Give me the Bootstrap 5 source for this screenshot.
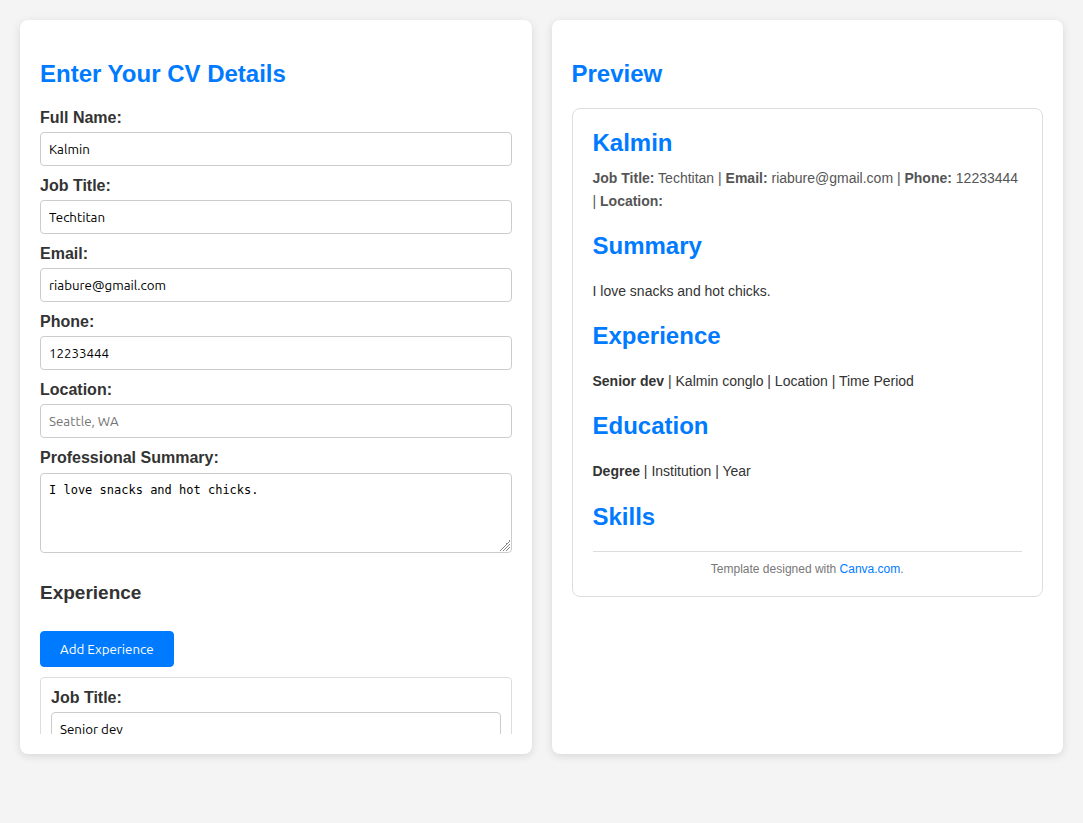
<!DOCTYPE html>
<html lang="en">
<head>
<meta charset="utf-8">
<meta name="viewport" content="width=device-width, initial-scale=1">
<title>CV Builder</title>
<link href="https://cdn.jsdelivr.net/npm/bootstrap@5.3.0/dist/css/bootstrap.min.css" rel="stylesheet">
<style>
  body { background: #f4f4f4; color: #333; font-family: "Liberation Sans", Arial, sans-serif; font-size: 16px; line-height: 18px; }
  .builder { gap: 20px; padding: 20px 20px 69px; }
  .panel { flex: 1 1 0; min-width: 0; padding: 20px; background: #fff; border-radius: 8px; box-shadow: 0 2px 8px rgba(0, 0, 0, .12); }
  h2 { margin: 20px 0; font-size: 24px; line-height: 28px; font-weight: 700; color: #007bff; }
  h3 { margin: 29px 0 27px; font-size: 19px; line-height: 22px; font-weight: 700; }
  .field { margin-bottom: 10px; }
  .form-label { display: block; margin-bottom: 4px; line-height: 20px; font-weight: 700; }
  .form-control, .form-control:focus { padding: 8px; border: 1px solid #ccc; border-radius: 4px; color: #000; background: #fff; }
  input.form-control, .btn { font-family: Ubuntu, "Noto Sans", sans-serif; font-size: smaller; line-height: 16px; }
  input.form-control { height: 34px; }
  .form-control::placeholder { color: #757575; }
  textarea.form-control { height: 80px; margin-top: 5px; font-family: "DejaVu Sans Mono", monospace; font-size: 12px; line-height: 16px; }
  textarea::-webkit-resizer { background: linear-gradient(135deg, transparent 50%, #888 50%, #888 58%, transparent 58%, transparent 64%, #888 64%, #888 72%, transparent 72%, transparent 78%, #888 78%, #888 86%, transparent 86%) 3px 3px / 11px 11px no-repeat; }
  .btn-primary { --bs-btn-bg: #007bff; --bs-btn-border-color: #007bff; height: 36px; padding: 10px 19px 8px; border-radius: 4px; }
  .entry { margin-top: 10px; padding: 10px; border: 1px solid #ddd; border-radius: 4px; }
  .resume { padding: 20px; border: 1px solid #ddd; border-radius: 8px; font-size: 14px; line-height: 22px; }
  .resume .person { margin: 0 0 10px; }
  .contact { line-height: 23px; color: #555; }
  .resume p { margin-bottom: 0; }
  .resume .contact + h2 { margin-top: 19px; }
  .resume .skills { margin-top: 21px; }
  .credit { padding-top: 10px; border-top: 1px solid #ddd; font-size: 12px; line-height: 14px; color: #777; }
  .credit a { color: #007bff; }
</style>
</head>
<body>
<main class="builder d-flex vh-100">
  <section class="panel">
    <form class="h-100 overflow-hidden">
      <h2>Enter Your CV Details</h2>
      <div class="field"><label class="form-label" for="name">Full Name:</label><input class="form-control" id="name" type="text" value="Kalmin"></div>
      <div class="field"><label class="form-label" for="title">Job Title:</label><input class="form-control" id="title" type="text" value="Techtitan"></div>
      <div class="field"><label class="form-label" for="email">Email:</label><input class="form-control" id="email" type="email" value="riabure@gmail.com"></div>
      <div class="field"><label class="form-label" for="phone">Phone:</label><input class="form-control" id="phone" type="tel" value="12233444"></div>
      <div class="field"><label class="form-label" for="location">Location:</label><input class="form-control" id="location" type="text" placeholder="Seattle, WA"></div>
      <div><label class="form-label" for="summary">Professional Summary:</label><textarea class="form-control" id="summary">I love snacks and hot chicks.</textarea></div>
      <h3>Experience</h3>
      <button class="btn btn-primary d-block" type="button">Add Experience</button>
      <div class="entry">
        <label class="form-label" for="exp-title">Job Title:</label><input class="form-control" id="exp-title" type="text" value="Senior dev">
      </div>
    </form>
  </section>
  <section class="panel">
    <div class="h-100 overflow-hidden">
      <h2>Preview</h2>
      <article class="resume">
        <h2 class="person">Kalmin</h2>
        <p class="contact"><strong>Job Title:</strong> Techtitan | <strong>Email:</strong> riabure@gmail.com | <strong>Phone:</strong> 12233444 | <strong>Location:</strong></p>
        <h2>Summary</h2>
        <p>I love snacks and hot chicks.</p>
        <h2>Experience</h2>
        <p><strong>Senior dev</strong> | Kalmin conglo | Location | Time Period</p>
        <h2>Education</h2>
        <p><strong>Degree</strong> | Institution | Year</p>
        <h2 class="skills">Skills</h2>
        <footer class="credit text-center">Template designed with <a class="text-decoration-none" href="#">Canva.com</a>.</footer>
      </article>
    </div>
  </section>
</main>
<script src="https://cdn.jsdelivr.net/npm/bootstrap@5.3.0/dist/js/bootstrap.bundle.min.js"></script>
</body>
</html>
